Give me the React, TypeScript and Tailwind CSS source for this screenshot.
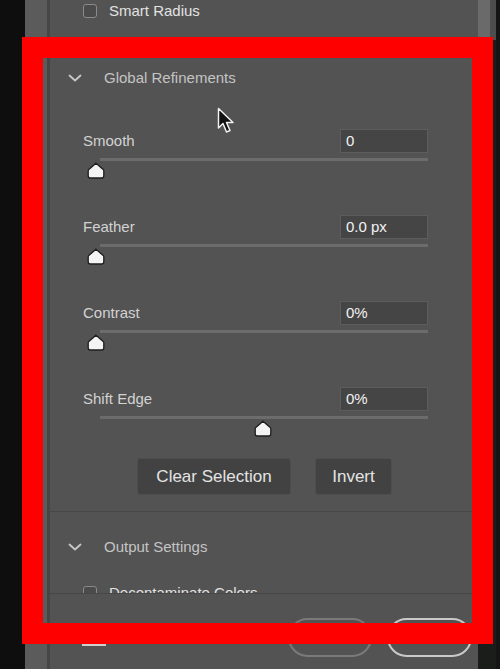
const sliders = [
  { label: "Smooth", value: "0", pos: 0 },
  { label: "Feather", value: "0.0 px", pos: 0 },
  { label: "Contrast", value: "0%", pos: 0 },
  { label: "Shift Edge", value: "0%", pos: 0.5 },
];

const Chevron = () => (
  <svg width="14" height="8" viewBox="0 0 14 8" className="shrink-0">
    <path d="M1.5 1.5 L7 6.5 L12.5 1.5" fill="none" stroke="#c8c8c8" strokeWidth="1.8" strokeLinecap="round" strokeLinejoin="round" />
  </svg>
);

const Checkbox = () => (
  <span className="block h-[14px] w-[14px] shrink-0 rounded-[3px] border-[1.5px] border-[#8a8a8a] bg-[#4b4b4b]" />
);

const Thumb = () => (
  <svg width="18" height="17" viewBox="0 0 18 17">
    <path
      d="M9 1.2 L16.2 7.4 Q16.8 8 16.8 9 L16.8 13.8 Q16.8 16 14.6 16 L3.4 16 Q1.2 16 1.2 13.8 L1.2 9 Q1.2 8 1.8 7.4 Z"
      fill="#f4f4f4"
      stroke="#1e1e1e"
      strokeWidth="1.3"
    />
  </svg>
);

const SliderRow = ({ label, value, pos }: { label: string; value: string; pos: number }) => (
  <div className="flex flex-col">
    <div className="flex h-[24px] items-center justify-between">
      <span className="text-[15px] text-[#d2d2d2]">{label}</span>
      <div className="flex h-[24px] w-[88px] items-center border border-[#5c5c5c] bg-[#454545] px-[5px] text-[15px] text-[#f2f2f2]">
        {value}
      </div>
    </div>
    <div className="ml-[17px] mt-[5px] h-[3px] bg-[#6c6c6c]" />
    <div className="relative h-[22px]">
      <div className="absolute top-[1px]" style={{ left: 4 + pos * 334 }}>
        <Thumb />
      </div>
    </div>
  </div>
);

export default function App() {
  return (
    <div className="relative flex h-[669px] w-[500px] overflow-hidden bg-[#0c0c0c] font-['Liberation_Sans',Arial,sans-serif]">
      {/* photo strip on the left */}
      <div className="w-[25px] shrink-0 bg-[#0e0e0e]" />
      <div className="w-[25px] shrink-0 border-r-[3px] border-[#464646] bg-[#5b5b5b]" />

      {/* panel */}
      <div className="flex w-[428px] shrink-0 flex-col bg-[#535353]">
        <div className="flex h-[593px] flex-col overflow-hidden">
          <div className="flex h-[22px] shrink-0 items-center gap-[12px] pl-[33px]">
            <Checkbox />
            <span className="text-[15px] text-[#e2e2e2]">Smart Radius</span>
          </div>
          <div className="mt-[25px] shrink-0 border-t border-[#474747]">
            <div className="flex h-[60px] items-center gap-[22px] pl-[18px]">
              <Chevron />
              <span className="text-[15px] text-[#c4c4c4]">Global Refinements</span>
            </div>
            <div className="mt-[21px] flex flex-col gap-8 pl-[33px] pr-[50px]">
              {sliders.map((s) => (
                <SliderRow key={s.label} {...s} />
              ))}
            </div>
            <div className="mt-[17px] flex gap-[24px] pb-[16px] pl-[87px]">
              <button className="h-[37px] w-[154px] rounded-[3px] border border-[#4e4e4e] bg-[#424242] text-[17px] text-[#e4e4e4]">
                Clear Selection
              </button>
              <button className="h-[37px] w-[77px] rounded-[3px] border border-[#4e4e4e] bg-[#424242] text-[17px] text-[#e4e4e4]">
                Invert
              </button>
            </div>
          </div>
          <div className="shrink-0 border-t border-[#474747]">
            <div className="flex h-[70px] items-center gap-[22px] pl-[18px]">
              <Chevron />
              <span className="text-[15px] text-[#c4c4c4]">Output Settings</span>
            </div>
            <div className="flex h-[22px] items-center gap-[12px] pl-[33px]">
              <Checkbox />
              <span className="text-[15px] text-[#e2e2e2]">Decontaminate Colors</span>
            </div>
          </div>
        </div>
        <div className="flex flex-1 items-start border-t border-[#474747] pt-[24px]">
          <div className="ml-[32px] mt-[26px] h-[2px] w-[24px] bg-[#cfcfcf]" />
          <div className="ml-auto flex gap-[15px] pr-[6px]">
            <div className="h-[39px] w-[84px] rounded-full border-2 border-[#7a7a7a]" />
            <div className="h-[39px] w-[85px] rounded-full border-2 border-[#c9c9c9]" />
          </div>
        </div>
      </div>

      {/* scrollbar + right edge */}
      <div className="flex w-[18px] shrink-0 flex-col bg-[#1b1d1a]">
        <div className="h-[40px] border-r-[6px] border-[#4d4d4d] bg-[#6a6a6a]" />
      </div>
      <div className="w-[4px] shrink-0 bg-[#151515]" />

      {/* cursor */}
      <svg className="absolute left-[217px] top-[107px]" width="20" height="28" viewBox="0 0 20 28">
        <path d="M1.5 1.5 L1.5 21 L6 16.5 L9.5 25 L13 23.5 L9.5 15.5 L16 15.5 Z" fill="#111" stroke="#f0f0f0" strokeWidth="1.5" strokeLinejoin="round" />
      </svg>

      {/* red highlight frame */}
      <div className="pointer-events-none absolute left-[22px] top-[37px] h-[607px] w-[471px] border-[21px] border-[#ff0000]" />
    </div>
  );
}
